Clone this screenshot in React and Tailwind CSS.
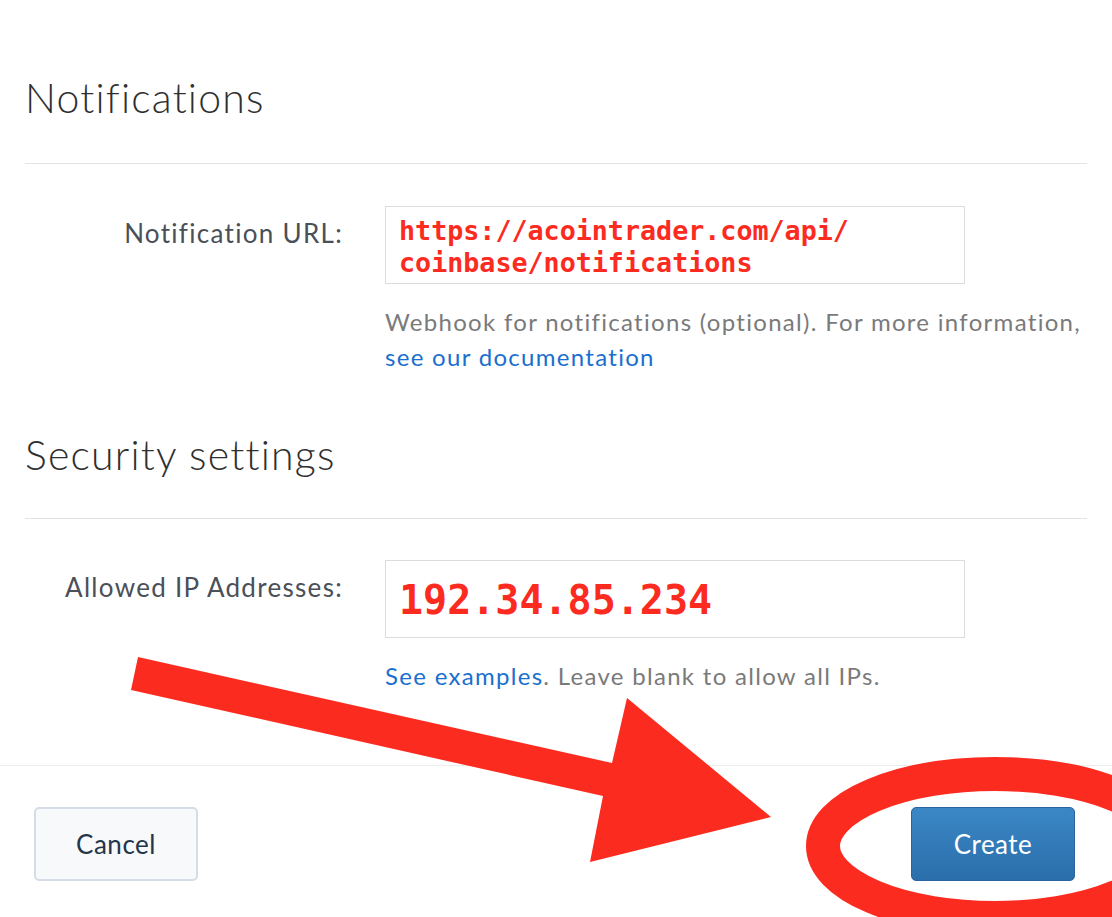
import React from "react";

// ─── Small pieces ─────────────────────────────────────────────────────────────

const SectionTitle = ({ children, className = "" }) => (
  <h2
    className={`ml-[25px] text-[41px] leading-[48px] font-light tracking-[1.2px] text-[#2f2f2f] ${className}`}
  >
    {children}
  </h2>
);

const Divider = ({ className = "" }) => (
  <div className={`mx-[25px] h-px bg-[#e3e3e3] ${className}`} />
);

const FieldRow = ({ label, children, help, className = "" }) => (
  <div className={`flex ${className}`}>
    <div className="w-[343px] shrink-0 pt-[11px] text-right text-[26px] leading-[32px] tracking-[1.3px] text-[#4a4f58]">
      {label}
    </div>
    <div className="ml-[42px]">
      {children}
      <div className="mt-[20px] whitespace-nowrap text-[24px] leading-[35px] tracking-[1.3px] text-[#7a7a7a]">
        {help}
      </div>
    </div>
  </div>
);

// ─── Annotation overlay ───────────────────────────────────────────────────────

const Annotations = () => (
  <svg
    className="pointer-events-none absolute left-0 top-0"
    width="1112"
    height="917"
    viewBox="0 0 1112 917"
  >
    <polygon
      points="138,657 612,763 627,698 771,817 590,862 603,796 131,690"
      fill="#fc2b1f"
    />
    <ellipse cx="995" cy="846" rx="172" ry="72" fill="none" stroke="#fc2b1f" strokeWidth="34" />
  </svg>
);

// ─── App ──────────────────────────────────────────────────────────────────────

export default function App() {
  return (
    <div className="relative h-[917px] w-[1112px] overflow-hidden bg-white pt-[74px] font-['Lato',sans-serif]">

      {/* ── Notifications ─────────────────────────────────────────────── */}
      <SectionTitle>Notifications</SectionTitle>
      <Divider className="mt-[41px]" />

      <FieldRow
        className="mt-[42px]"
        label="Notification URL:"
        help={
          <>
            Webhook for notifications (optional). For more information,
            <br />
            <span className="text-[#1b6fcf]">see our documentation</span>
          </>
        }
      >
        <div className="h-[78px] w-[580px] border border-[#dcdcdc] pl-[13px] pt-[8px] font-['DejaVu_Sans_Mono',monospace] text-[26.7px] font-bold leading-[31.5px] text-[#fc2b1f]">
          https://acointrader.com/api/
          <br />
          coinbase/notifications
        </div>
      </FieldRow>

      {/* ── Security settings ─────────────────────────────────────────── */}
      <SectionTitle className="mt-[57px]">Security settings</SectionTitle>
      <Divider className="mt-[39px]" />

      <FieldRow
        className="mt-[41px]"
        label="Allowed IP Addresses:"
        help={
          <>
            <span className="text-[#1b6fcf]">See examples</span>. Leave blank to allow all IPs.
          </>
        }
      >
        <div className="h-[78px] w-[580px] border border-[#dcdcdc] pl-[13px] pt-[15px] font-['DejaVu_Sans_Mono',monospace] text-[40px] font-bold leading-[48px] text-[#fc2b1f]">
          192.34.85.234
        </div>
      </FieldRow>

      {/* ── Footer ────────────────────────────────────────────────────── */}
      <div className="mt-[72px] h-px bg-[#ececec]" />
      <div className="mt-[41px] flex justify-between pl-[34px] pr-[37px]">
        <button className="h-[74px] w-[164px] rounded-[5px] border-2 border-[#d5dee8] bg-[#f7f9fb] text-[26px] tracking-[0.5px] text-[#253549]">
          Cancel
        </button>
        <button className="h-[74px] w-[164px] rounded-[5px] border border-[#2a63a0] bg-gradient-to-b from-[#3b87c5] to-[#2a6fab] text-[26px] tracking-[0.5px] text-white">
          Create
        </button>
      </div>

      <Annotations />
    </div>
  );
}
